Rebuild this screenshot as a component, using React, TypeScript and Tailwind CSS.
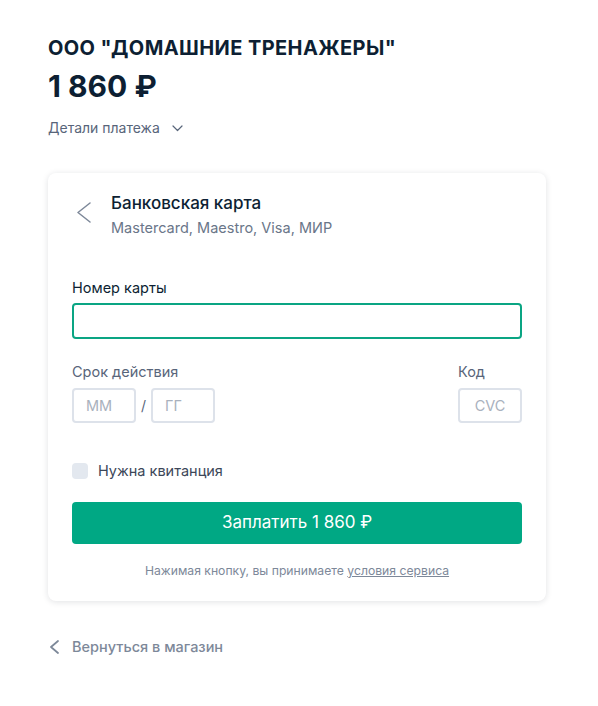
import React from 'react';

function Chevron({ w, h, stroke = 1.5, className = '' }: { w: number; h: number; stroke?: number; className?: string }) {
  return (
    <svg width={w} height={h} viewBox={`0 0 ${w} ${h}`} fill="none" className={className}>
      <polyline points={`${w - 1},1 1,${h / 2} ${w - 1},${h - 1}`} stroke="currentColor" strokeWidth={stroke} strokeLinecap="round" strokeLinejoin="round" />
    </svg>
  );
}

export default function App() {
  return (
    <div className="min-h-screen bg-white px-12 pt-[37px] text-[#0d1f33]" style={{ fontFamily: 'Inter, "Noto Sans", sans-serif' }}>
      {/* Header */}
      <h1 className="text-[20px] font-bold leading-[22px] tracking-[0.4px]">ООО "ДОМАШНИЕ ТРЕНАЖЕРЫ"</h1>
      <div className="mt-[9px] text-[30px] font-bold leading-[36px]">1 860 ₽</div>
      <button className="mt-[13px] flex items-center gap-[12px] text-[14px] text-[#58657a]">
        Детали платежа
        <svg width="11" height="7" viewBox="0 0 11 7" fill="none" className="mt-[1px]">
          <polyline points="1,1 5.5,5.5 10,1" stroke="currentColor" strokeWidth="1.2" strokeLinecap="round" strokeLinejoin="round" />
        </svg>
      </button>

      {/* Card */}
      <div className="mt-[35px] w-[498px] rounded-lg bg-white px-6 pb-[21px] pt-[20px] shadow-[0_1px_6px_rgba(20,30,50,0.13)]">
        <div className="flex items-start">
          <Chevron w={14} h={21} className="ml-[5px] mt-[9px] text-[#7d8899]" />
          <div className="ml-[20px]">
            <div className="text-[17px] font-medium leading-[20px]">Банковская карта</div>
            <div className="mt-[6px] text-[14.5px] leading-[18px] text-[#6a7689]">Mastercard, Maestro, Visa, МИР</div>
          </div>
        </div>

        <div className="mt-[42px] text-[14.5px] leading-[18px]">Номер карты</div>
        <input className="mt-[6px] h-[36px] w-full rounded border-2 border-[#0aa583] px-3 outline-none" />

        <div className="mt-[24px] flex justify-between">
          <div>
            <div className="text-[14.5px] leading-[18px] text-[#58657a]">Срок действия</div>
            <div className="mt-[7px] flex items-center gap-[5px]">
              <input placeholder="MM" className="h-[35px] w-[64px] rounded border-2 border-[#dde2ea] px-3 text-[14.5px] placeholder:text-[#a9b1bd] outline-none" />
              <span className="text-[14px] text-[#58657a]">/</span>
              <input placeholder="ГГ" className="h-[35px] w-[64px] rounded border-2 border-[#dde2ea] px-3 text-[14.5px] placeholder:text-[#a9b1bd] outline-none" />
            </div>
          </div>
          <div>
            <div className="text-[14.5px] leading-[18px] text-[#58657a]">Код</div>
            <input placeholder="CVC" className="mt-[7px] h-[35px] w-[64px] rounded border-2 border-[#dde2ea] px-2 text-center text-[14.5px] placeholder:text-[#a9b1bd] outline-none" />
          </div>
        </div>

        <label className="mt-[37px] flex items-center gap-[10px]">
          <span className="h-4 w-4 rounded bg-[#e3e8ef]" />
          <span className="text-[14.5px] text-[#3c4759]">Нужна квитанция</span>
        </label>

        <button className="mt-[20px] h-[42px] w-full rounded bg-[#00a884] text-[17px] text-white">Заплатить 1 860 ₽</button>

        <p className="mt-[18px] text-center text-[12.2px] text-[#7d8899]">
          Нажимая кнопку, вы принимаете <span className="underline">условия сервиса</span>
        </p>
      </div>

      <button className="mt-[35px] flex items-center gap-[13px] text-[14.5px] font-medium text-[#7d8899]">
        <Chevron w={9} h={14} stroke={1.75} className="ml-[2px]" />
        Вернуться в магазин
      </button>
    </div>
  );
}
